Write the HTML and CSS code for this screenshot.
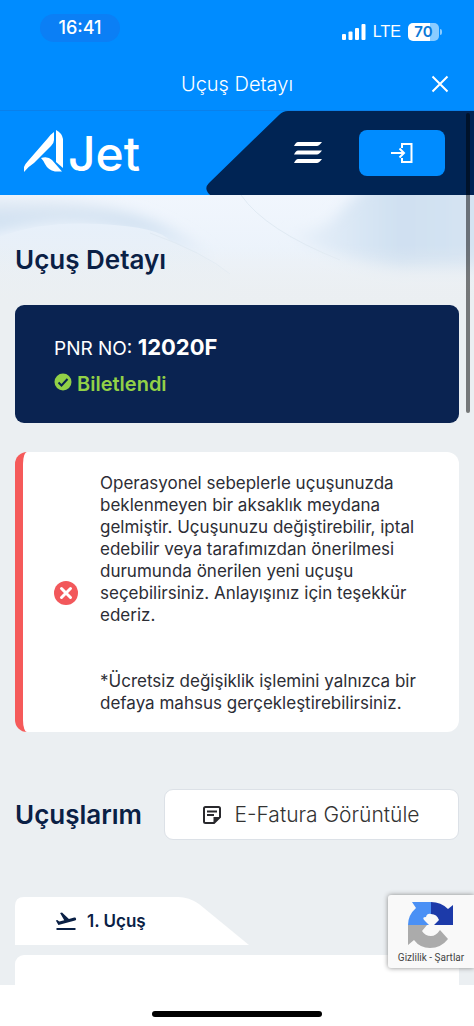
FILE: index.html
```
<!DOCTYPE html>
<html lang="tr">
<head>
<meta charset="utf-8">
<meta name="viewport" content="width=device-width, initial-scale=1">
<title>Uçuş Detayı</title>
<link rel="stylesheet" href="styles.css">
</head>
<body>
<div class="top">
  <div class="status">
    <span class="clock">16:41</span>
    <div class="signals">
      <svg class="bars" viewBox="0 0 24 16" aria-hidden="true"><rect x="0" y="10" width="4" height="6" rx="1"/><rect x="6.500" y="7.500" width="4" height="8.500" rx="1"/><rect x="13" y="4" width="4" height="12" rx="1"/><rect x="19.500" y="0" width="4" height="16" rx="1"/></svg>
      <span class="lte">LTE</span>
      <span class="battery">70</span>
      <span class="battery-cap"></span>
    </div>
  </div>
  <div class="titlebar">
    <span class="screen-title">Uçuş Detayı</span>
    <button class="close" aria-label="Kapat"><svg viewBox="0 0 18 18"><path d="M1.500 1.500 16.500 16.500M16.500 1.500 1.500 16.500"/></svg></button>
  </div>
</div>
<div class="view">
  <header class="header">
    <a class="logo" href="#" aria-label="AJet">
      <svg viewBox="0 0 40 43" aria-hidden="true"><path d="M0 42V37Q1 34 4 31L24 8Q27 4 30 2V10Q30 13 27 16L10 33Q5 36 0 42Z"/><path d="M32 0Q38 3 39 9V38L32 32Z"/><path d="M17 28Q24 26 28 30L38 41.500H31Q24 40 21 34Q19 30 17 28Z"/></svg>
      <span class="wordmark">Jet</span>
    </a>
    <div class="nav">
      <svg class="nav-shape" viewBox="0 0 268 85" preserveAspectRatio="xMinYMin slice" aria-hidden="true"><path d="M268 0H82Q77 0 73 4L3 72Q-1 76 1 80Q3 85 8 85H268Z"/></svg>
      <button class="menu" aria-label="Menü"><svg viewBox="0 0 30 22"><path d="M5 0H29Q26 4 24 4H1Q3 0 5 0ZM5 8.500H29Q26 12.500 24 12.500H1Q3 8.500 5 8.500ZM5 17H29Q26 21 24 21H1Q3 17 5 17Z"/></svg></button>
      <button class="login" aria-label="Giriş yap"><svg viewBox="0 0 22 20"><path d="M11 5V1H20.500V19H11V15M0 10H13M8.500 5.500 13 10 8.500 14.500"/></svg></button>
    </div>
  </header>
  <main class="content">
    <svg class="waves" viewBox="0 0 474 110" preserveAspectRatio="none" aria-hidden="true">
      <defs>
        <linearGradient id="base" x1="0" y1="0" x2="0" y2="1"><stop offset="0" stop-color="#f1f6fd"/><stop offset=".5" stop-color="#ecf3fb"/><stop offset="1" stop-color="#ebeff2"/></linearGradient>
        <linearGradient id="left" x1="0" y1="0" x2="0" y2="1"><stop offset="0" stop-color="#e4ecf5"/><stop offset=".4" stop-color="#cfe0f1"/><stop offset="1" stop-color="#e5eef8"/></linearGradient>
        <linearGradient id="right" x1="0" y1="0" x2="1" y2="0"><stop offset="0" stop-color="#e9f1fa"/><stop offset=".5" stop-color="#cfe0f1"/><stop offset="1" stop-color="#d8e5f3"/></linearGradient>
        <linearGradient id="low" x1="0" y1="0" x2="0" y2="1"><stop offset="0" stop-color="#e7f0fa"/><stop offset="1" stop-color="#ebeff2"/></linearGradient>
        <linearGradient id="fade" x1="0" y1="0" x2="0" y2="1"><stop offset="0" stop-color="#ebeff2" stop-opacity="0"/><stop offset="1" stop-color="#ebeff2"/></linearGradient>
        <filter id="soft" x="-20%" y="-30%" width="140%" height="160%"><feGaussianBlur stdDeviation="7"/></filter>
      </defs>
      <rect width="474" height="110" fill="url(#base)"/>
      <path d="M-30 4Q80 2 130 18T215 66Q160 38 100 30T-30 46Z" fill="url(#left)" filter="url(#soft)"/>
      <path d="M0 42Q40 26 100 29T170 46Q205 60 230 80V110H0Z" fill="url(#low)"/>
      <path d="M510 -20H380Q345 8 332 26Q315 38 290 40Q340 68 400 74H510Z" fill="url(#right)" filter="url(#soft)"/>
      <path d="M241 0Q265 35 340 65M150 38Q205 58 230 79" fill="none" stroke="#e0eaf3"/>
      <rect y="50" width="474" height="60" fill="url(#fade)"/>
    </svg>
    <h1 class="heading page-heading">Uçuş Detayı</h1>
    <section class="pnr">
      <div class="pnr-no">PNR NO: <strong>12020F</strong></div>
      <div class="ticketed"><svg viewBox="0 0 18 18" aria-hidden="true"><circle cx="9" cy="9" r="8.500"/><path d="M4.500 9.500 7.500 12.500 13.500 6"/></svg><span>Biletlendi</span></div>
    </section>
    <section class="alert">
      <svg class="alert-icon" viewBox="0 0 24 24" aria-hidden="true"><circle cx="12" cy="12" r="12"/><path d="M7.500 7.500 16.500 16.500M16.500 7.500 7.500 16.500"/></svg>
      <div class="alert-text">
        <p>Operasyonel sebeplerle uçuşunuzda beklenmeyen bir aksaklık meydana gelmiştir. Uçuşunuzu değiştirebilir, iptal edebilir veya tarafımızdan önerilmesi durumunda önerilen yeni uçuşu seçebilirsiniz. Anlayışınız için teşekkür ederiz.</p>
        <p>*Ücretsiz değişiklik işlemini yalnızca bir defaya mahsus gerçekleştirebilirsiniz.</p>
      </div>
    </section>
    <div class="flights-head">
      <h2 class="heading">Uçuşlarım</h2>
      <button class="invoice"><svg viewBox="0 0 18 18" aria-hidden="true"><path d="M1 2.500Q1 1 2.500 1H15.500Q17 1 17 2.500V11L11 17H2.500Q1 17 1 15.500ZM4 5.500H14M4 9H11"/><path class="fold" d="M10.500 17V11H17Z"/></svg><span>E-Fatura Görüntüle</span></button>
    </div>
    <button class="tab">
      <svg class="tab-shape" viewBox="0 0 234 48" preserveAspectRatio="none" aria-hidden="true"><path d="M0 48V9Q0 0 9 0H163Q174 0 184 7L234 48Z"/></svg>
      <svg class="plane" viewBox="0 0 24 24" aria-hidden="true"><path d="M2.500 19h19v2h-19zm19.570-9.360c-.21-.8-1.040-1.280-1.840-1.060L14.920 10l-6.900-6.430-1.930.51 4.140 7.170-4.970 1.330-1.970-1.540-1.450.39 2.590 4.490L21 11.490c.81-.23 1.280-1.050 1.070-1.850z"/></svg>
      <span>1. Uçuş</span>
    </button>
    <div class="flight-card"></div>
    <aside class="captcha">
      <svg viewBox="0 0 46 46" aria-hidden="true"><path fill="#4a90f5" d="M4 0H23V12Q19 11 18 15Q13 15 17 19L21 23H0Q0 13 8 6Z"/><path fill="#1c3aa9" d="M23 0Q33 0 40 7L45 3V23H26L31 18Q29 12 23 12Z"/><path fill="#ababab" d="M0 23H19L14 29Q17 34 23 34Q28 34 32 28L40 37Q33 46 22 46Q12 46 6 38L0 43Z"/></svg>
      <div><a href="#">Gizlilik</a> - <a href="#">Şartlar</a></div>
    </aside>
  </main>
  <div class="scrollbar"></div>
</div>
<footer class="home"><span class="home-bar"></span></footer>
</body>
</html>
```
FILE: styles.css
```
* { box-sizing: border-box; }
body {
  margin: 0;
  min-height: 100vh;
  display: flex;
  flex-direction: column;
  background: #fff;
  font-family: Inter, "Liberation Sans", sans-serif;
}
button { border: 0; padding: 0; background: none; font: inherit; color: inherit; }
svg { display: block; flex: none; }
a { color: inherit; text-decoration: none; }
h1, h2, p { margin: 0; }
.top { background: #008cff; color: #fff; padding-top: 14px; }
.status { display: flex; justify-content: space-between; align-items: flex-start; padding: 0 32px 0 40px; height: 44px; }
.clock { width: 80px; height: 28px; border-radius: 14px; background: #0b7ff5; text-align: center; font-size: 18px; font-weight: 500; line-height: 28px; }
.signals { display: flex; align-items: center; padding-top: 8px; }
.bars { width: 24px; height: 16px; fill: #fff; }
.lte { margin: 0 7px; font-family: "Liberation Sans", sans-serif; font-size: 16px; line-height: 20px; }
.battery { width: 31px; height: 18px; border-radius: 5px; background: linear-gradient(90deg, #fff 70%, #8accff 70%); color: #0a79d8; text-align: center; font-size: 15px; font-weight: 600; line-height: 18px; }
.battery-cap { width: 2px; height: 6px; margin-left: 1px; border-radius: 0 2px 2px 0; background: #8accff; }
.titlebar { display: grid; grid-template-columns: 1fr auto 1fr; align-items: center; height: 53px; padding: 0 25px; border-bottom: 1px solid #0a80ea; }
.screen-title { grid-column: 2; font-size: 20px; font-weight: 300; line-height: 24px; }
.close { justify-self: end; }
.close svg { width: 18px; height: 18px; fill: none; stroke: #fff; stroke-width: 2; }
.view { position: relative; flex: 1; display: flex; flex-direction: column; }
.header { display: flex; justify-content: space-between; height: 84px; background: #008cff; }
.logo { display: flex; align-items: flex-start; gap: 4px; padding: 19px 0 0 24px; color: #fff; }
.logo svg { width: 40px; height: 43px; fill: #fff; }
.wordmark { font-size: 48px; font-weight: 500; line-height: 48px; }
.nav { position: relative; width: 268px; display: flex; align-items: center; justify-content: flex-end; gap: 36px; padding-right: 29px; }
.nav-shape { position: absolute; inset: 0; width: 100%; height: 100%; fill: #002454; }
.menu, .login { position: relative; }
.menu svg { width: 30px; height: 22px; fill: #fff; }
.login { display: grid; place-items: center; width: 86px; height: 46px; border-radius: 8px; background: #008cff; }
.login svg { width: 22px; height: 20px; fill: none; stroke: #fff; stroke-width: 2; }
.content { position: relative; flex: 1; display: flex; flex-direction: column; padding: 50px 15px 0; background: #ebeff2; }
.waves { position: absolute; top: 0; left: 0; width: 100%; height: 110px; }
.heading { color: #0a2045; font-size: 26px; font-weight: 600; line-height: 30px; }
.page-heading { position: relative; }
.pnr { margin-top: 30px; padding: 28px 39px 26px; border-radius: 9px; background: #0a2351; color: #fff; }
.pnr-no { font-size: 19px; line-height: 28px; }
.pnr-no strong { font-size: 22px; font-weight: 700; }
.ticketed { display: flex; gap: 5px; margin-top: 8px; color: #92d147; font-size: 20px; font-weight: 600; line-height: 26px; }
.ticketed svg { width: 18px; height: 18px; margin-top: 2px; fill: #92d147; }
.ticketed path { fill: none; stroke: #0a2351; stroke-width: 2; }
.alert { display: flex; align-items: center; gap: 22px; margin-top: 29px; padding: 20px 32px 18px 31px; border-left: 8px solid #f55a5a; border-radius: 12px; background: #fff; }
.alert-icon { width: 24px; height: 24px; fill: #f2585b; }
.alert-icon path { stroke: #fff; stroke-width: 3; stroke-linecap: round; }
.alert-text { display: grid; gap: 44px; color: #2c2d35; font-size: 17px; line-height: 22px; }
.flights-head { display: flex; align-items: center; gap: 22px; margin-top: 57px; }
.invoice { flex: 1; display: flex; align-items: center; justify-content: center; gap: 13px; height: 51px; border: 1px solid #dce1e7; border-radius: 9px; background: #fff; color: #333; font-size: 21px; font-weight: 300; white-space: nowrap; }
.invoice svg { width: 18px; height: 18px; fill: none; stroke: #29292d; stroke-width: 2; }
.invoice .fold { fill: #29292d; stroke: none; }
.tab { position: relative; display: flex; align-items: center; gap: 9px; width: 234px; height: 48px; margin-top: 57px; padding-left: 39px; color: #0a2045; font-size: 17px; font-weight: 600; }
.tab-shape { position: absolute; inset: 0; width: 100%; height: 100%; fill: #fff; }
.plane { position: relative; width: 24px; height: 24px; fill: #0a2045; }
.tab span { position: relative; }
.flight-card { flex: 1; min-height: 30px; margin-top: 10px; border-radius: 9px 9px 0 0; background: #fff; }
.captcha { position: absolute; right: 0; bottom: 17px; width: 86px; height: 73px; display: flex; flex-direction: column; align-items: center; gap: 4px; padding-top: 7px; border-radius: 3px 0 0 3px; background: #f9f9f9; box-shadow: 0 0 5px #888; color: #444; font-family: Roboto, sans-serif; font-size: 10px; line-height: 12px; white-space: nowrap; }
.captcha svg { width: 46px; height: 46px; }
.scrollbar { position: absolute; top: 2px; right: 4px; width: 4px; height: 300px; border-radius: 2px; background: rgba(0, 0, 0, .5); }
.home { display: flex; justify-content: center; height: 42px; padding-top: 26px; }
.home-bar { width: 36%; height: 6px; border-radius: 3px; background: #000; }
```
